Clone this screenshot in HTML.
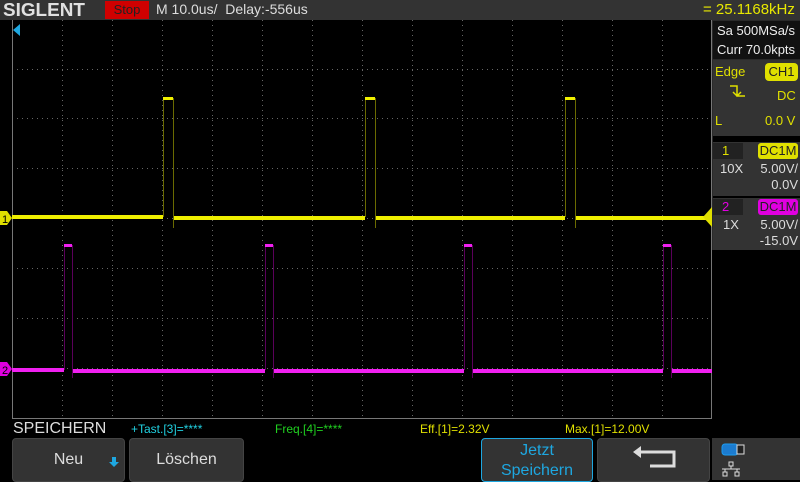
<!DOCTYPE html>
<html><head><meta charset="utf-8"><style>
*{margin:0;padding:0;box-sizing:border-box}
body{width:800px;height:480px;background:#000;position:relative;overflow:hidden;font-family:"Liberation Sans",sans-serif}
.a{position:absolute;white-space:nowrap}
.btn{position:absolute;top:438px;height:44px;background:#333;border:1px solid #444;border-radius:4px;color:#ddd;font-size:16px;text-align:center}
</style></head><body>
<div class="a" style="left:0;top:0;width:800px;height:20px;background:#333"></div>
<div class="a" style="left:3px;top:0px;font-size:18px;line-height:20px;font-weight:bold;color:#e0e0e0;transform:scaleX(1.05);transform-origin:left">SIGLENT</div>
<div class="a" style="left:105px;top:1px;width:44px;height:18px;background:#d00000;color:#222;font-size:13px;text-align:center;line-height:18px">Stop</div>
<div class="a" style="left:156px;top:1px;font-size:14px;color:#ddd">M 10.0us/&nbsp; Delay:-556us</div>
<div class="a" style="left:703px;top:0px;font-size:15px;color:#e8e800;line-height:20px">= 25.1168kHz</div>
<svg class="a" style="left:0;top:0" width="800" height="480">
<g stroke="#666" stroke-width="1" stroke-dasharray="1,4">
<line x1="62.5" y1="20" x2="62.5" y2="418"/><line x1="112.5" y1="20" x2="112.5" y2="418"/><line x1="162.5" y1="20" x2="162.5" y2="418"/><line x1="212.5" y1="20" x2="212.5" y2="418"/><line x1="262.5" y1="20" x2="262.5" y2="418"/><line x1="312.5" y1="20" x2="312.5" y2="418"/><line x1="362.5" y1="20" x2="362.5" y2="418"/><line x1="412.5" y1="20" x2="412.5" y2="418"/><line x1="462.5" y1="20" x2="462.5" y2="418"/><line x1="512.5" y1="20" x2="512.5" y2="418"/><line x1="562.5" y1="20" x2="562.5" y2="418"/><line x1="612.5" y1="20" x2="612.5" y2="418"/><line x1="662.5" y1="20" x2="662.5" y2="418"/>
<line x1="12" y1="69.5" x2="712" y2="69.5"/><line x1="12" y1="118.5" x2="712" y2="118.5"/><line x1="12" y1="168.5" x2="712" y2="168.5"/><line x1="12" y1="218.5" x2="712" y2="218.5"/><line x1="12" y1="268.5" x2="712" y2="268.5"/><line x1="12" y1="318.5" x2="712" y2="318.5"/><line x1="12" y1="368.5" x2="712" y2="368.5"/>
</g>
<line x1="12.5" y1="20" x2="12.5" y2="418" stroke="#777"/>
<line x1="711.5" y1="20" x2="711.5" y2="418" stroke="#777"/>
<line x1="12" y1="418.5" x2="712" y2="418.5" stroke="#777"/>
<polygon points="13,30 20,24 20,36" fill="#1ea7e0"/>
<g stroke="#6a6a00" stroke-width="1" fill="none">
<path d="M163.5 217V98M173.5 98V228M365.5 217V98M375.5 98V228M565.5 217V98M575.5 98V228"/>
</g>
<g fill="#f0f000">
<rect x="12" y="215" width="151" height="4"/><rect x="174" y="216" width="191" height="4"/><rect x="376" y="216" width="189" height="4"/><rect x="576" y="216" width="136" height="4"/>
<rect x="163" y="97" width="10" height="3"/><rect x="365" y="97" width="10" height="3"/><rect x="565" y="97" width="10" height="3"/>
</g>
<g stroke="#5a005a" stroke-width="1" fill="none">
<path d="M64.5 370V245M72.5 245V378M265.5 370V245M273.5 245V378M464.5 370V245M472.5 245V378M663.5 370V245M671.5 245V378"/>
</g>
<g fill="#f020f0">
<rect x="12" y="368" width="52" height="4"/><rect x="73" y="369" width="192" height="4"/><rect x="274" y="369" width="190" height="4"/><rect x="473" y="369" width="190" height="4"/><rect x="672" y="369" width="40" height="4"/>
<rect x="64" y="244" width="8" height="3"/><rect x="265" y="244" width="8" height="3"/><rect x="464" y="244" width="8" height="3"/><rect x="663" y="244" width="8" height="3"/>
</g>
<path d="M0 211H7L12 218L7 225H0Z" fill="#e0e000"/><text x="2" y="223" font-size="11" fill="#000" font-family="Liberation Sans">1</text>
<path d="M0 362H7L12 369L7 376H0Z" fill="#e000e0"/><text x="2" y="374" font-size="11" fill="#000" font-family="Liberation Sans">2</text>
<polygon points="712,217 703,217 712,207" fill="#e0e000"/><polygon points="703,217 712,217 712,227" fill="#e0e000"/>
</svg>
<div class="a" style="left:712px;top:20px;width:88px;height:460px;background:#2a2a2a"></div>
<div class="a" style="left:713px;top:21px;width:87px;height:38px;background:#111"></div>
<div class="a" style="left:717px;top:21px;font-size:13px;color:#eee;line-height:19px">Sa 500MSa/s<br>Curr 70.0kpts</div>
<div class="a" style="left:713px;top:60px;width:87px;height:76px;background:#333"></div>
<div class="a" style="left:715px;top:64px;font-size:13px;color:#e0e000">Edge</div>
<div class="a" style="left:765px;top:63px;width:33px;height:18px;background:#e0e000;border-radius:4px;color:#222;font-size:13px;text-align:center;line-height:18px">CH1</div>
<svg class="a" style="left:728px;top:84px" width="20" height="16"><path d="M2 2H9V12H17M5 8L9 12L13 8" stroke="#e0e000" stroke-width="1.5" fill="none"/></svg>
<div class="a" style="left:777px;top:88px;font-size:13px;color:#e0e000">DC</div>
<div class="a" style="left:715px;top:113px;font-size:13px;color:#e0e000">L</div>
<div class="a" style="left:765px;top:113px;font-size:13px;color:#e0e000">0.0 V</div>
<div class="a" style="left:713px;top:136px;width:87px;height:6px;background:#000"></div>
<div class="a" style="left:713px;top:142px;width:87px;height:54px;background:#333"></div>
<div class="a" style="left:713px;top:143px;width:30px;height:16px;background:#222"></div>
<div class="a" style="left:722px;top:143px;font-size:13px;color:#e0e000">1</div>
<div class="a" style="left:758px;top:143px;width:40px;height:16px;background:#e0e000;border-radius:3px;color:#222;font-size:13px;text-align:center;line-height:16px">DC1M</div>
<div class="a" style="left:720px;top:161px;font-size:13px;color:#ddd">10X</div>
<div class="a" style="right:2px;top:161px;font-size:13px;color:#ddd;text-align:right;line-height:16px">5.00V/<br>0.0V</div>
<div class="a" style="left:713px;top:196px;width:87px;height:2px;background:#000"></div>
<div class="a" style="left:713px;top:198px;width:87px;height:52px;background:#333"></div>
<div class="a" style="left:713px;top:199px;width:30px;height:16px;background:#222"></div>
<div class="a" style="left:722px;top:199px;font-size:13px;color:#e000e0">2</div>
<div class="a" style="left:758px;top:199px;width:40px;height:16px;background:#e000e0;border-radius:3px;color:#222;font-size:13px;text-align:center;line-height:16px">DC1M</div>
<div class="a" style="left:723px;top:217px;font-size:13px;color:#ddd">1X</div>
<div class="a" style="right:2px;top:217px;font-size:13px;color:#ddd;text-align:right;line-height:16px">5.00V/<br>-15.0V</div>
<div class="a" style="left:712px;top:250px;width:88px;height:188px;background:#000"></div>
<div class="a" style="left:712px;top:438px;width:88px;height:42px;background:#333"></div>
<svg class="a" style="left:720px;top:440px" width="36" height="40"><rect x="2" y="4" width="16" height="11" rx="3" fill="#1c7cd0" stroke="#1c9cf0"/><rect x="17" y="5" width="7" height="9" fill="#222" stroke="#ddd"/><g stroke="#ddd" fill="none"><rect x="9" y="22" width="4" height="4"/><path d="M11 26V29M2 29H20M5 29V32M17 29V32"/><rect x="3" y="32" width="4" height="4"/><rect x="15" y="32" width="4" height="4"/></g></svg>
<div class="a" style="left:13px;top:420px;font-size:16px;color:#ddd">SPEICHERN</div>
<div class="a" style="left:131px;top:422px;font-size:12px;color:#20d0e0">+Tast.[3]=****</div>
<div class="a" style="left:275px;top:422px;font-size:12px;color:#20d020">Freq.[4]=****</div>
<div class="a" style="left:420px;top:422px;font-size:12px;color:#e0e000">Eff.[1]=2.32V</div>
<div class="a" style="left:565px;top:422px;font-size:12px;color:#e0e000">Max.[1]=12.00V</div>
<div class="btn" style="left:12px;width:113px;line-height:42px">Neu</div>
<svg class="a" style="left:108px;top:456px" width="12" height="12"><path d="M4 1H8V6H11L6 11L1 6H4Z" fill="#1ea7e0"/></svg>
<div class="btn" style="left:129px;width:115px;line-height:42px">Löschen</div>
<div class="btn" style="left:481px;width:112px;border-color:#1ea7e0;color:#1ea7e0;line-height:20px;padding-top:2px">Jetzt<br>Speichern</div>
<div class="btn" style="left:597px;width:113px"></div>
<svg class="a" style="left:630px;top:446px" width="50" height="26"><path d="M10 6H44V20H20" stroke="#ddd" stroke-width="3" fill="none"/><path d="M3 6L11 0V12Z" fill="#ddd"/></svg>
</body></html>
